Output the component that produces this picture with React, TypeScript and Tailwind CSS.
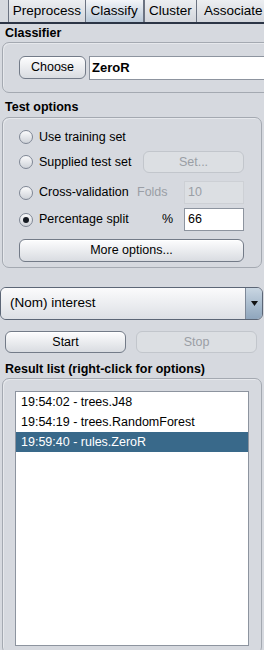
import React from 'react';

const font = { fontFamily: '"Liberation Sans", Arial, sans-serif' };

const Tab: React.FC<{ label: string; active?: boolean; width: string }> = ({ label, active, width }) => (
    <div
        className={`${width} h-full flex items-center justify-center border-l border-[#6b7382] text-[13.5px] ${
            active ? 'bg-gradient-to-b from-[#f3f5f8] to-[#b9c8d7] border-r border-[#2b3445]' : 'bg-gradient-to-b from-[#eceef1] to-[#d3d6dc]'
        }`}
    >
        {label}
    </div>
);

const Button: React.FC<{ label: string; className?: string; disabled?: boolean }> = ({ label, className = '', disabled }) => (
    <div
        className={`flex items-center justify-center rounded-[6px] border text-[12.5px] ${
            disabled
                ? 'border-[#c2c6cc] bg-[#dcdfe3] text-[#9a9ea5]'
                : 'border-[#737b88] bg-gradient-to-b from-[#fdfdfe] to-[#d9dce1] text-black shadow-[inset_0_1px_0_#ffffff]'
        } ${className}`}
    >
        {label}
    </div>
);

const Radio: React.FC<{ checked?: boolean }> = ({ checked }) => (
    <div className="w-[14px] h-[14px] rounded-full border border-[#7f8795] bg-gradient-to-b from-[#fbfbfc] to-[#cfd3d9] flex items-center justify-center shrink-0">
        {checked && <div className="w-[6px] h-[6px] rounded-full bg-[#151a22]" />}
    </div>
);

const Panel: React.FC<{ className?: string; children?: React.ReactNode }> = ({ className = '', children }) => (
    <div className={`rounded-[7px] border border-[#a4a9b1] bg-[#d6d9df] shadow-[inset_1px_1px_0_#e6e8ec] ${className}`}>{children}</div>
);

const results = ['19:54:02 - trees.J48', '19:54:19 - trees.RandomForest', '19:59:40 - rules.ZeroR'];

export default function App() {
    return (
        <div className="w-[264px] h-[650px] overflow-hidden bg-[#d6d9df] text-black text-[12.5px]" style={font}>
            {/* tabs */}
            <div className="h-[22px] flex pl-[8px]">
                <Tab label="Preprocess" width="w-[79px]" />
                <Tab label="Classify" width="w-[61px]" active />
                <Tab label="Cluster" width="w-[54px]" />
                <Tab label="Associate" width="w-[70px] justify-start pl-[7px]" />
            </div>
            <div className="h-[2px] bg-[#2b3445]" />

            <div className="h-[18px] flex items-center pl-[5px] font-bold">Classifier</div>
            <Panel className="ml-[2px] w-[270px] h-[51px] flex items-center pl-[16px]">
                <Button label="Choose" className="w-[67px] h-[23px]" />
                <div className="ml-[3px] flex-1 h-[24px] bg-white border border-[#8d949f] flex items-center pl-[2px] font-bold text-[13px]">
                    ZeroR
                </div>
            </Panel>

            <div className="mt-[5px] h-[18px] flex items-center pl-[5px] font-bold">Test options</div>
            <Panel className="mt-[1px] ml-[2px] w-[260px] h-[151px] pl-[16px] pt-[8px]">
                <div className="h-[22px] flex items-center">
                    <Radio />
                    <span className="ml-[6px]">Use training set</span>
                </div>
                <div className="mt-[3px] h-[22px] flex items-center">
                    <div className="w-[124px] flex items-center">
                        <Radio />
                        <span className="ml-[6px]">Supplied test set</span>
                    </div>
                    <Button label="Set..." disabled className="w-[101px] h-[22px]" />
                </div>
                <div className="mt-[8px] h-[23px] flex items-center">
                    <div className="w-[118px] flex items-center">
                        <Radio />
                        <span className="ml-[6px]">Cross-validation</span>
                    </div>
                    <span className="w-[47px] text-[#9a9ea5]">Folds</span>
                    <div className="w-[60px] h-[23px] bg-[#dcdfe3] border border-[#cdd0d5] flex items-center pl-[3px] text-[#9a9ea5]">10</div>
                </div>
                <div className="mt-[4px] h-[23px] flex items-center">
                    <div className="w-[118px] flex items-center">
                        <Radio checked />
                        <span className="ml-[6px]">Percentage split</span>
                    </div>
                    <span className="w-[47px] pl-[25px]">%</span>
                    <div className="w-[60px] h-[23px] bg-white border border-[#8d949f] flex items-center pl-[3px]">66</div>
                </div>
                <Button label="More options..." className="mt-[8px] w-[225px] h-[23px]" />
            </Panel>

            {/* class attribute selector */}
            <div className="mt-[19px] w-[263px] h-[33px] flex rounded-[6px] border border-[#5c6676] overflow-hidden">
                <div className="flex-1 flex items-center pl-[9px] text-[13.5px] bg-gradient-to-b from-[#fbfbfc] to-[#dde0e5]">(Nom) interest</div>
                <div className="w-[17px] border-l border-[#7d8898] bg-gradient-to-b from-[#c9d6e2] to-[#8fa6bd] flex items-center justify-center">
                    <svg width="7" height="5" viewBox="0 0 7 5">
                        <path d="M0 0 H7 L3.5 5 Z" fill="#111" />
                    </svg>
                </div>
            </div>

            <div className="mt-[11px] h-[22px] flex pl-[5px] gap-[10px]">
                <Button label="Start" className="w-[121px] h-[22px]" />
                <Button label="Stop" disabled className="w-[121px] h-[22px]" />
            </div>

            <div className="mt-[7px] h-[18px] flex items-center pl-[5px] font-bold">Result list (right-click for options)</div>
            <Panel className="ml-[2px] w-[260px] h-[276px] pl-[12px] pt-[12px]">
                <div className="w-[234px] h-[255px] bg-white border border-[#8d949f]">
                    {results.map((r, i) => (
                        <div
                            key={r}
                            className={`h-[20px] flex items-center pl-[5px] ${i === 2 ? 'bg-[#39698a] text-white' : ''}`}
                        >
                            {r}
                        </div>
                    ))}
                </div>
            </Panel>
        </div>
    );
}
